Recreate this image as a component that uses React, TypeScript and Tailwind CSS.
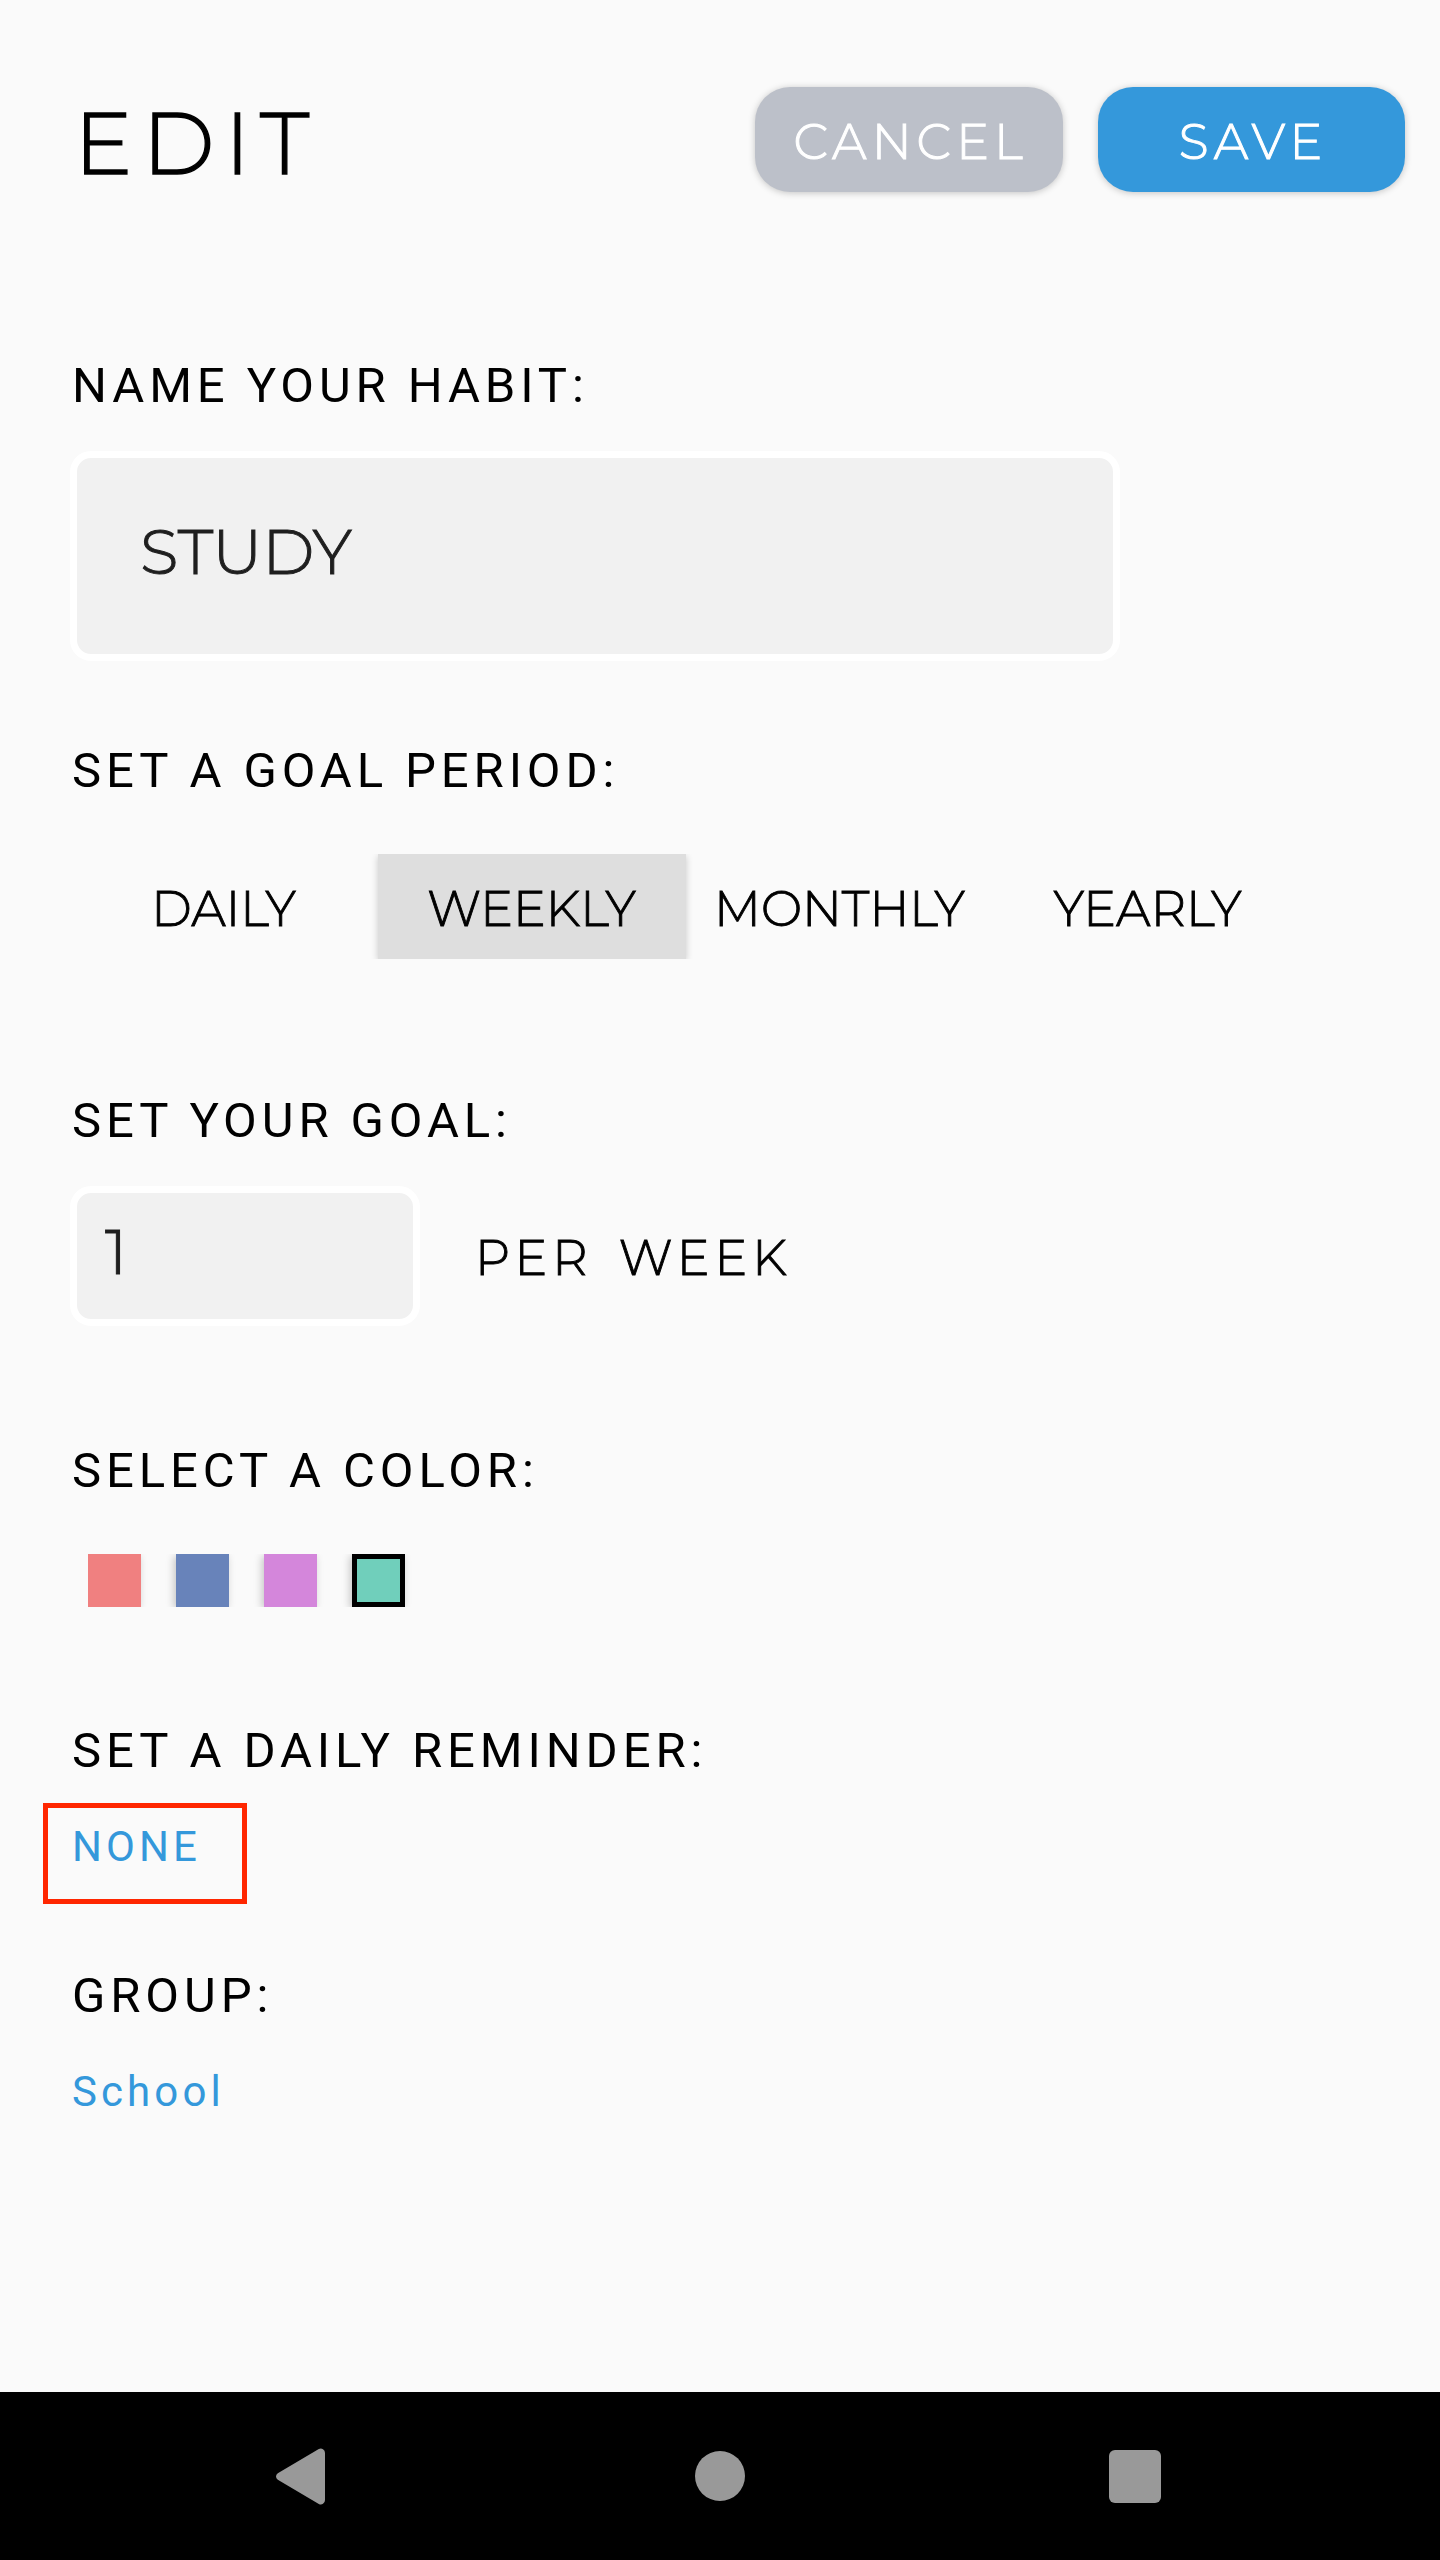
import React from "react";

const periods = ["DAILY", "WEEKLY", "MONTHLY", "YEARLY"];

const colors = [
  { name: "coral", className: "bg-[#f08080]" },
  { name: "blue", className: "bg-[#6883ba]" },
  { name: "orchid", className: "bg-[#d486db]" },
  { name: "teal", className: "bg-[#70cfbb] border-5 border-black" },
];

const display = "font-['Montserrat','Inter',sans-serif] font-light";

function Label({ children, className }: { children: string; className: string }) {
  return (
    <h2
      className={`ml-[2px] pt-px whitespace-nowrap text-[49px] leading-[57px] font-normal tracking-[4.9px] text-black ${className}`}
    >
      {children}
    </h2>
  );
}

function HeaderButton({ children, className }: { children: string; className: string }) {
  return (
    <button
      className={`${display} flex h-[105px] items-center justify-center rounded-[35px] pt-[4px] pl-[3px] text-[49px] leading-[59px] tracking-[5px] text-white shadow-[0_1px_7px_rgba(0,0,0,0.22)] [-webkit-text-stroke:1px_white] ${className}`}
    >
      {children}
    </button>
  );
}

function Header() {
  return (
    <header className="flex items-start pt-[87px]">
      <h1
        className={`${display} mt-[2px] ml-[74px] w-[681px] text-[87.5px] leading-[107px] tracking-[9.8px] text-black [-webkit-text-stroke:1.3px_black]`}
      >
        EDIT
      </h1>
      <HeaderButton className="w-[308px] bg-[#bcc0c9]">CANCEL</HeaderButton>
      <HeaderButton className="ml-[35px] w-[307px] bg-[#3498db]">SAVE</HeaderButton>
    </header>
  );
}

function Field({ value, className }: { value: string; className: string }) {
  return (
    <div
      className={`${display} flex items-center rounded-[21px] border-7 border-white bg-[#f1f1f1] pb-[9px] text-[63px] leading-[77px] text-[#1f1f1f] [-webkit-text-stroke:1px_#1f1f1f] ${className}`}
    >
      {value}
    </div>
  );
}

function NavigationBar() {
  return (
    <nav className="flex h-[168px] items-center bg-black text-[#999999]">
      <svg className="ml-[276px] h-[57px] w-[49px]" viewBox="0 0 49 57" fill="currentColor">
        <path d="M1.8 25.2 42.8 1.1Q45 -.2 47 1.2Q49 2.4 49 5V52Q49 54.6 47 55.8Q45 57.2 42.8 55.9L1.8 31.8Q0 30.6 0 28.5Q0 26.4 1.8 25.2Z" />
      </svg>
      <span className="ml-[370px] size-[50px] rounded-full bg-current" />
      <span className="ml-[364px] h-[53px] w-[52px] rounded-[6px] bg-current" />
    </nav>
  );
}

export default function App() {
  return (
    <div className="flex h-[2560px] w-[1440px] flex-col overflow-hidden bg-[#fafafa] font-['Roboto',sans-serif]">
      <Header />

      <main className="flex-1 pl-[70px]">
        <Label className="mt-[160px]">NAME YOUR HABIT:</Label>
        <Field value="STUDY" className="mt-[37px] h-[210px] w-[1050px] pl-[63px]" />

        <Label className="mt-[80px]">SET A GOAL PERIOD:</Label>
        <div className="mt-[55px] flex overflow-hidden">
          {periods.map((period) => (
            <button
              key={period}
              className={`${display} flex h-[105px] w-[308px] items-center justify-center pt-[4px] pr-px text-[49px] leading-[59px] text-black [-webkit-text-stroke:0.9px_black] ${
                period === "WEEKLY" ? "bg-[#dedede] shadow-[0_2px_7px_rgba(0,0,0,0.2)]" : ""
              }`}
            >
              {period}
            </button>
          ))}
        </div>

        <Label className="mt-[132px]">SET YOUR GOAL:</Label>
        <div className="mt-[37px] flex items-center">
          <Field value="1" className="h-[140px] w-[350px] pl-[28px]" />
          <span
            className={`${display} ml-[55px] pt-[3px] text-[49px] leading-[59px] tracking-[4.9px] text-black [word-spacing:9px] [-webkit-text-stroke:0.9px_black]`}
          >
            PER WEEK
          </span>
        </div>

        <Label className="mt-[115px]">SELECT A COLOR:</Label>
        <div className="mt-[55px] ml-[18px] flex w-[330px] gap-[35px] overflow-hidden">
          {colors.map((color) => (
            <button
              key={color.name}
              aria-label={color.name}
              className={`size-[53px] shadow-[-2px_2px_8px_rgba(0,0,0,0.22)] ${color.className}`}
            />
          ))}
        </div>

        <Label className="mt-[114px]">SET A DAILY REMINDER:</Label>
        <div className="mt-[24px] -ml-[27px] h-[101px] w-[204px] border-5 border-[#ff2600] pt-[14px] pl-[24px] text-[42px] leading-[49px] tracking-[4.1px] text-[#3498db]">
          NONE
        </div>

        <Label className="mt-[62px]">GROUP:</Label>
        <p className="mt-[43px] ml-[2px] text-[42px] leading-[49px] tracking-[4.1px] text-[#3498db]">
          School
        </p>
      </main>

      <NavigationBar />
    </div>
  );
}
